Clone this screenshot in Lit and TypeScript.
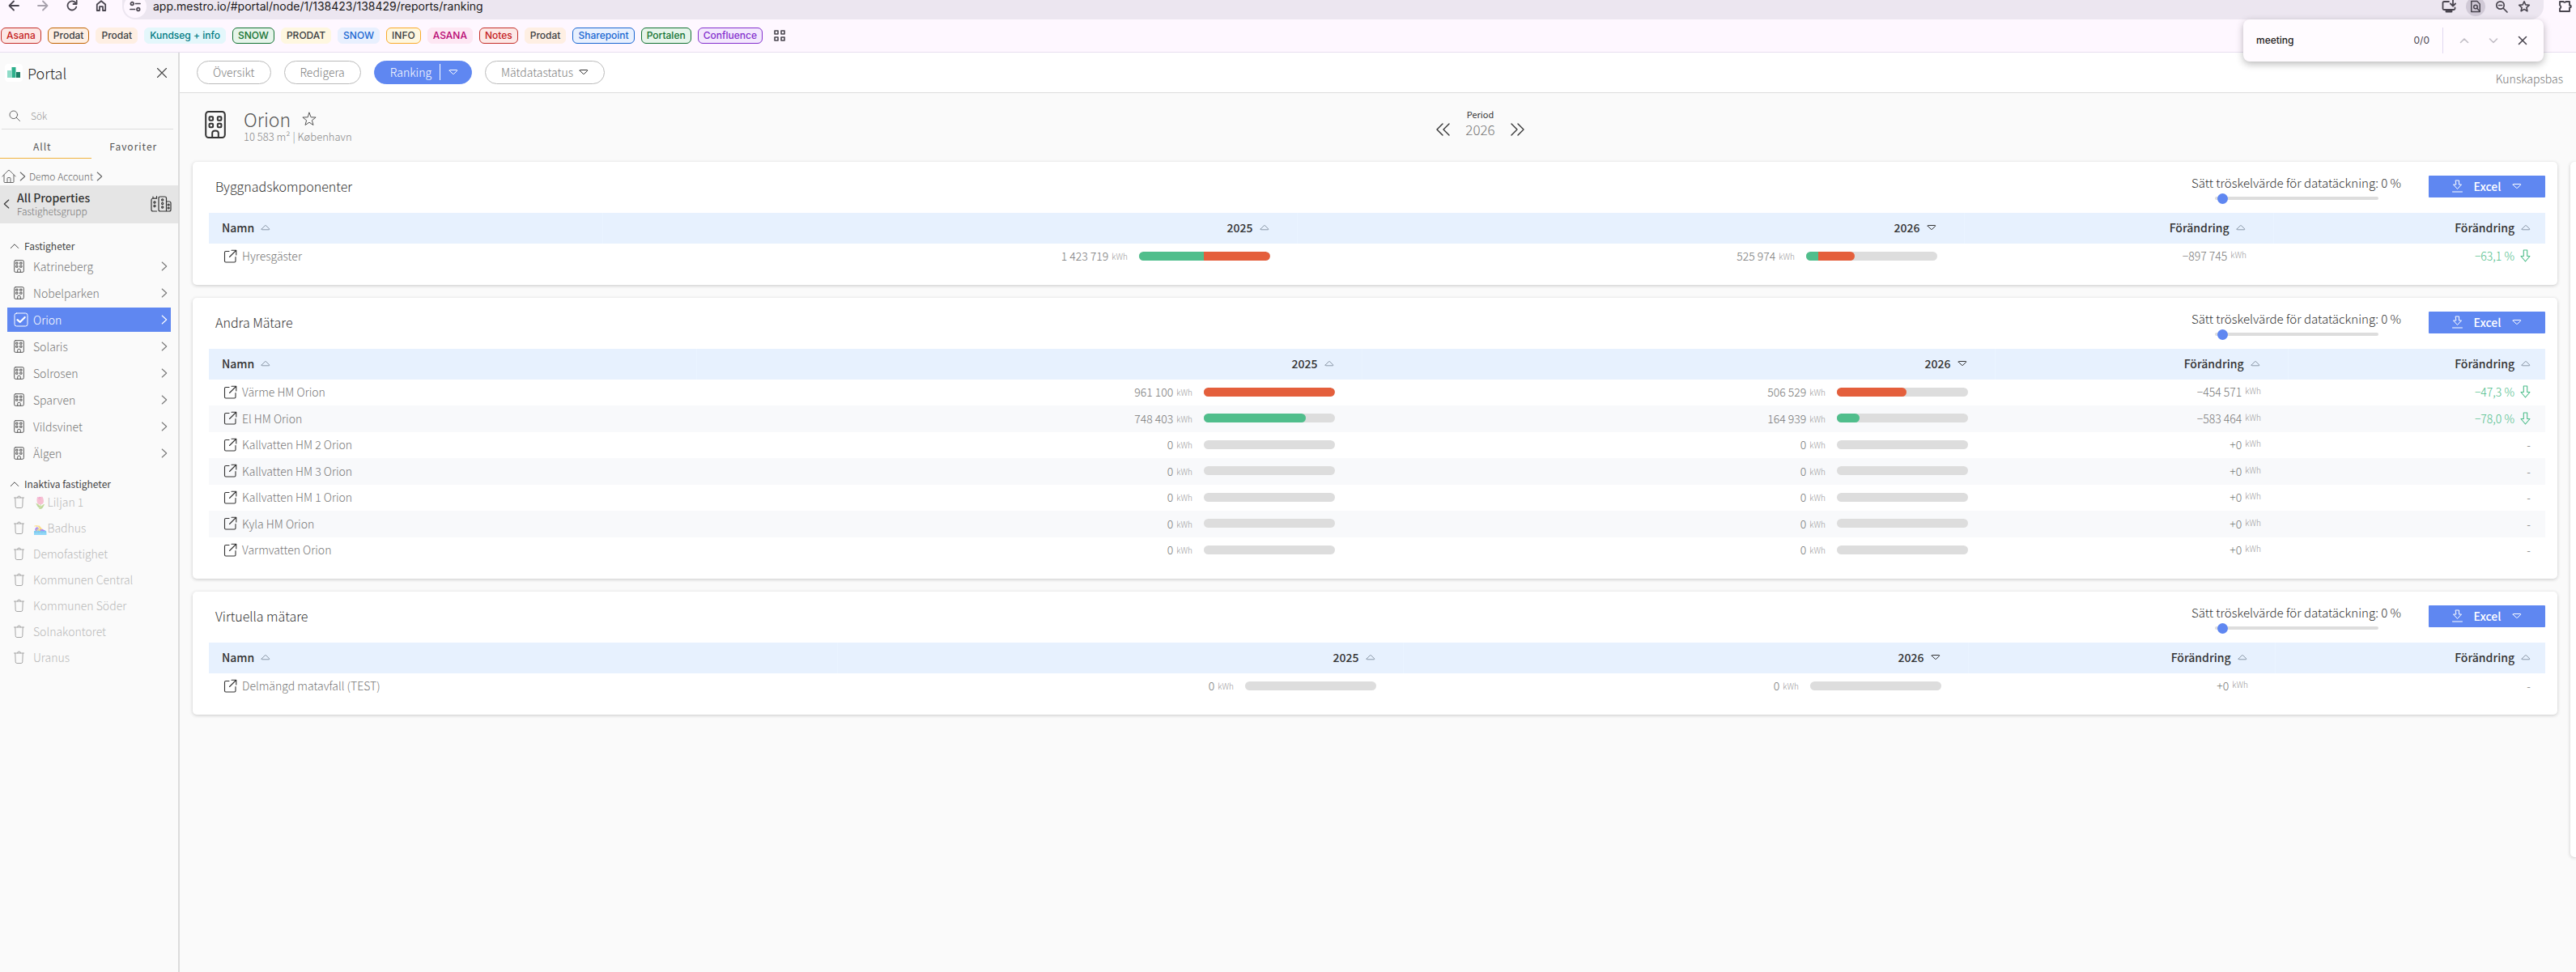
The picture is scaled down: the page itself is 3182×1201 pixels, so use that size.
import { LitElement, html, css, svg, nothing } from "lit";
import { customElement, property } from "lit/decorators.js";
import { classMap } from "lit/directives/class-map.js";

type IconName =
  | "back" | "forward" | "reload" | "home" | "tune" | "install" | "findPage" | "zoomOut" | "star"
  | "puzzle" | "apps" | "chevUp" | "chevDown" | "cross" | "logo" | "thinCross" | "search" | "house"
  | "chevRight" | "chevLeft" | "caretUp" | "city" | "building" | "checkbox" | "trash" | "bigBuilding"
  | "thinStar" | "double" | "doubleRight" | "open" | "triUp" | "triDown" | "download" | "arrowDown";

const ICONS: Record<IconName, { box: string; w: number; h: number; sw: number; body: unknown }> = {
  back: { box: "0 0 14 14", w: 14, h: 14, sw: 1.8, body: svg`<path d="M13 7H2M7 1.5L1.5 7L7 12.5"/>` },
  forward: { box: "0 0 14 14", w: 14, h: 14, sw: 1.8, body: svg`<path d="M1 7h11M7 1.5L12.5 7L7 12.5"/>` },
  reload: { box: "0 0 14 14", w: 14, h: 14, sw: 1.8, body: svg`<path d="M12.3 8.5A5.5 5.5 0 1 1 11.2 3.4L12.5 4.8M12.7 .8V5H8.5"/>` },
  home: { box: "0 0 14 14", w: 14, h: 14, sw: 1.8, body: svg`<path d="M1.8 5.5L7 1.2l5.2 4.3V13H9V8.2H5V13H1.8z"/>` },
  tune: { box: "0 0 14 14", w: 14, h: 14, sw: 1.7, body: svg`<circle cx="3.2" cy="3.5" r="1.8"/><path d="M7.5 3.5H13M1 10.5h5.5"/><circle cx="10.8" cy="10.5" r="1.8"/>` },
  install: { box: "0 0 18 16", w: 18, h: 16, sw: 1.8, body: svg`<path d="M9 2H3a1.5 1.5 0 0 0-1.5 1.5v7A1.5 1.5 0 0 0 3 12h12a1.5 1.5 0 0 0 1.5-1.5V9.5M14 0v7M11 4.5l3 3l3-3"/><path d="M6 14h6" stroke-width="3"/>` },
  findPage: { box: "0 0 16 18", w: 14, h: 16, sw: 1.7, body: svg`<path d="M2 1.5h8l4 4V16.5H2z"/><circle cx="8" cy="9.5" r="2.6"/><path d="M10 11.5l4 4.5"/>` },
  zoomOut: { box: "0 0 16 16", w: 16, h: 16, sw: 1.7, body: svg`<circle cx="6.5" cy="6.5" r="4.7"/><path d="M10 10l5 5M4.5 6.5h4"/>` },
  star: { box: "0 0 16 16", w: 16, h: 16, sw: 1.6, body: svg`<path d="M8 1.8l1.8 4.1 4.5.4-3.4 3 1 4.4L8 11.4l-3.9 2.3 1-4.4-3.4-3 4.5-.4z"/>` },
  puzzle: { box: "0 0 18 16", w: 18, h: 16, sw: 1.9, body: svg`<path d="M2 2h4.5c.6 1.2 2.4 1.2 3 0H14v4.5c2.4 0 2.4 3 0 3V14H2v-3.5c1.8-.8 1.8-3.2 0-4z"/>` },
  apps: { box: "0 0 14 14", w: 14, h: 14, sw: 1.6, body: svg`<path d="M1 1h4v4H1zM9 1h4v4H9zM1 9h4v4H1zM9 9h4v4H9z"/>` },
  chevUp: { box: "0 0 12 12", w: 12, h: 12, sw: 1.6, body: svg`<path d="M1.5 8.5L6 4l4.5 4.5"/>` },
  chevDown: { box: "0 0 12 12", w: 12, h: 12, sw: 1.6, body: svg`<path d="M1.5 4L6 8.5L10.5 4"/>` },
  cross: { box: "0 0 12 12", w: 12, h: 12, sw: 1.6, body: svg`<path d="M1.5 1.5l9 9M10.5 1.5l-9 9"/>` },
  logo: { box: "0 0 22 22", w: 22, h: 22, sw: 0, body: svg`<rect width="22" height="22" rx="4" fill="#fff"/><path d="M3 8h5v9H3z" fill="#8fdcc8"/><path d="M8.5 4h5v13h-5z" fill="#2eb08c"/><path d="M14 10h5v7h-5z" fill="#1d7f66"/>` },
  thinCross: { box: "0 0 14 14", w: 14, h: 14, sw: 1.1, body: svg`<path d="M1.5 1.5l11 11M12.5 1.5l-11 11"/>` },
  search: { box: "0 0 14 14", w: 14, h: 14, sw: 1, body: svg`<circle cx="5.8" cy="5.8" r="4.8"/><path d="M9.3 9.3l4.2 4.2"/>` },
  house: { box: "0 0 18 18", w: 18, h: 18, sw: 1, body: svg`<path d="M.8 9L8 1.8q1-1 2 0L17.2 9M3 7.2V15.5q0 1 1 1H14q1 0 1-1V7.2M7 16.5V11.5q0-1 1-1h2q1 0 1 1v5"/>` },
  chevRight: { box: "0 0 8 12", w: 8, h: 12, sw: 1.1, body: svg`<path d="M1.2 1l5.5 5L1.2 11"/>` },
  chevLeft: { box: "0 0 8 12", w: 8, h: 12, sw: 1.1, body: svg`<path d="M6.8 1L1.3 6l5.5 5"/>` },
  caretUp: { box: "0 0 12 8", w: 12, h: 8, sw: 1, body: svg`<path d="M1.3 6.5L6 1.8l4.7 4.7"/>` },
  city: { box: "0 0 26 20", w: 26, h: 20, sw: 1.2, body: svg`<path d="M7.5 19H3q-2 0-2-2V5q0-1.5 2-2V1.2M3 3.2h4.5V.5M10 17V3q0-2 2-2h5.500q2 0 2 2v16H12q-2 0-2-2M19.500 7h3.500q2 0 2 2v8q0 2-2 2h-3.500"/><circle cx="5" cy="8" r="1.100"/><circle cx="5" cy="12.5" r="1.100"/><circle cx="14.700" cy="5" r="1.100"/><circle cx="14.700" cy="9.5" r="1.100"/><circle cx="14.700" cy="14" r="1.100"/><circle cx="22.200" cy="11" r="1"/><circle cx="22.200" cy="15" r="1"/>` },
  building: { box: "0 0 13 16", w: 13, h: 16, sw: 1, body: svg`<rect x=".7" y=".7" width="11.6" height="14.6" rx="1.5"/><path d="M3 3.2h2v2H3zM8 3.2h2v2H8zM3 7.2h2v2H3zM8 7.2h2v2H8zM4.7 15v-2.5q0-1.2 1.8-1.2t1.8 1.2V15"/>` },
  checkbox: { box: "0 0 18 18", w: 18, h: 18, sw: 1, body: svg`<rect x="1" y="1" width="16" height="16" rx="2.5"/><path d="M4.5 9.2l3.2 2.8l6-6" stroke-width="2.2"/>` },
  trash: { box: "0 0 13 16", w: 13, h: 16, sw: 1, body: svg`<path d="M.5 3h12M4.5 2.8q0-1.8 2-1.8t2 1.8M1.8 3.2l.4 10.6q.1 1.7 1.7 1.7h5.2q1.6 0 1.7-1.7l.4-10.6"/>` },
  bigBuilding: { box: "0 0 26 34", w: 26, h: 34, sw: 2, body: svg`<rect x="1.2" y="1" width="23.6" height="32" rx="3.5"/><rect x="5.5" y="7.2" width="4.6" height="4.6" rx="1"/><rect x="15.8" y="7.2" width="4.6" height="4.6" rx="1"/><rect x="5.5" y="15.7" width="4.6" height="4.6" rx="1"/><rect x="15.8" y="15.7" width="4.6" height="4.6" rx="1"/><path d="M9.2 33v-5.5q0-3 3.8-3t3.8 3V33"/>` },
  thinStar: { box: "0 0 18 18", w: 18, h: 18, sw: 1, body: svg`<path d="M9 1.2l2.1 5.6 6 .2-4.7 3.7 1.6 5.8L9 13.2l-5 3.3 1.6-5.8L.9 7l6-.2z"/>` },
  double: { box: "0 0 17 16", w: 17, h: 16, sw: 1.4, body: svg`<path d="M8 1L1 8l7 7M16 1L9 8l7 7"/>` },
  doubleRight: { box: "0 0 17 16", w: 17, h: 16, sw: 1.4, body: svg`<path d="M1 1l7 7l-7 7M9 1l7 7l-7 7"/>` },
  open: { box: "0 0 17 17", w: 17, h: 17, sw: 1.1, body: svg`<path d="M7 2.5H3q-1.5 0-1.5 1.5v10.5q0 1.5 1.5 1.5h10.5q1.5 0 1.5-1.5V9.5M10 1.2h5.8V7M15.5 1.5L7.5 9.5"/>` },
  triUp: { box: "0 0 12 8", w: 12, h: 8, sw: 1, body: svg`<path d="M1.2 6L5.3 1.8q.7-.7 1.4 0L10.8 6q.2.8-.6.8H1.8q-.8 0-.6-.8z"/>` },
  triDown: { box: "0 0 12 8", w: 12, h: 8, sw: 1, body: svg`<path d="M1.2 2.2L5.3 6.2q.7.7 1.4 0L10.8 2.2q.1-.7-.6-.7H1.8q-.7 0-.6.7z"/>` },
  download: { box: "0 0 13 16", w: 13, h: 16, sw: 1, body: svg`<path d="M4.5 1h4v5h3l-5 5.5L1.5 6h3zM.5 15h12"/>` },
  arrowDown: { box: "0 0 13 16", w: 13, h: 16, sw: 1.1, body: svg`<path d="M4.3 1h4.4v7.5H12L6.5 15L1 8.5h3.3z"/>` },
};

const icon = (name: IconName) => {
  const i = ICONS[name];
  return html`<svg class="icon" width=${i.w} height=${i.h} viewBox=${i.box} fill="none" stroke="currentColor"
    stroke-width=${i.sw} stroke-linecap="round" stroke-linejoin="round" aria-hidden="true">${i.body}</svg>`;
};

const shared = css`
  * { box-sizing: border-box; }
  .icon { display: block; flex: none; overflow: visible; }
  button, input { font: inherit; color: inherit; letter-spacing: inherit; margin: 0; padding: 0; border: 0; background: none; }
  button { display: flex; align-items: center; cursor: pointer; }
  a { color: inherit; text-decoration: none; }
  ul { list-style: none; margin: 0; padding: 0; }
  h1, h2, h3, p { margin: 0; font-weight: inherit; font-size: inherit; }
`;

const SANS = css`"Noto Sans CJK SC", "Noto Color Emoji", sans-serif`;

interface Bookmark { label: string; ink: string; fill: string; line?: string }

const BOOKMARKS: Bookmark[] = [
  { label: "Asana", ink: "#c5221f", fill: "#fce8e6", line: "#c5302a" },
  { label: "Prodat", ink: "#3c4043", fill: "#feefe3", line: "#c26401" },
  { label: "Prodat", ink: "#3c4043", fill: "#feefe3" },
  { label: "Kundseg + info", ink: "#007b83", fill: "#e4f7fb" },
  { label: "SNOW", ink: "#137333", fill: "#e6f4ea", line: "#137333" },
  { label: "PRODAT", ink: "#3c4043", fill: "#fef7e0" },
  { label: "SNOW", ink: "#1967d2", fill: "#e8f0fe" },
  { label: "INFO", ink: "#3c4043", fill: "#fef7e0", line: "#f9ab2b" },
  { label: "ASANA", ink: "#b80672", fill: "#fde7f3" },
  { label: "Notes", ink: "#c5221f", fill: "#fce8e6", line: "#c5302a" },
  { label: "Prodat", ink: "#3c4043", fill: "#feefe3" },
  { label: "Sharepoint", ink: "#1967d2", fill: "#e8f0fe", line: "#1967d2" },
  { label: "Portalen", ink: "#137333", fill: "#e6f4ea", line: "#137333" },
  { label: "Confluence", ink: "#8430ce", fill: "#f3e8fd", line: "#8430ce" },
];

@customElement("browser-chrome")
class BrowserChrome extends LitElement {
  static styles = [shared, css`
    :host { display: block; position: relative; z-index: 2; background: #fef7ff; border-bottom: 1px solid #e7dff0; font: 500 12px/18px Inter, sans-serif; color: #49454f; }
    .bar { display: flex; height: 24px; }
    .nav { display: flex; gap: 22px; width: 151px; height: 14px; padding-left: 10px; }
    .faded { color: #a7a1ac; }
    .address { flex: 1; display: flex; align-items: center; height: 24px; padding: 0 16px 8px 8px; background: #ece6f0; border-radius: 0 0 16px 16px; }
    .site { width: 28px; height: 28px; justify-content: center; margin: 0 8px 0 -6px; background: #fef7ff; border-radius: 14px; }
    .url { flex: 1; font-size: 14px; font-weight: 400; color: #1d1b20; }
    .tools { display: flex; align-items: center; gap: 12px; }
    .round { width: 24px; height: 24px; border-radius: 12px; background: #d0c9d6; justify-content: center; }
    .end { width: 40px; padding-left: 18px; height: 16px; }
    .marks { display: flex; align-items: center; gap: 8px; padding: 10px 1px; }
    .mark { padding: 0 6px; border: 1px solid transparent; border-radius: 6px; line-height: 18px; }
    .apps { margin-left: 6px; }
    .find { position: absolute; top: 24px; right: 40px; width: 371px; height: 52px; display: flex; align-items: center; padding: 0 16px; background: #fffbff; border-radius: 8px; box-shadow: 0 3px 10px rgba(0, 0, 0, .28); }
    .term { flex: 1; min-width: 0; color: #1d1b20; }
    .count { font-weight: 400; padding-right: 16px; }
    .steps { display: flex; align-items: center; gap: 24px; height: 32px; padding: 0 4px 0 20px; border-left: 1px solid #e0d8f0; }
    .pale { color: #c2bec6; }
    input { outline: none; }
  `];

  render() {
    return html`
      <div class="bar">
        <div class="nav">
          <button aria-label="Back">${icon("back")}</button>
          <button class="faded" aria-label="Forward">${icon("forward")}</button>
          <button aria-label="Reload">${icon("reload")}</button>
          <button aria-label="Home">${icon("home")}</button>
        </div>
        <div class="address">
          <button class="site" aria-label="Site information">${icon("tune")}</button>
          <input class="url" aria-label="Address" .value=${"app.mestro.io/#portal/node/1/138423/138429/reports/ranking"}>
          <div class="tools">
            <button aria-label="Install">${icon("install")}</button>
            <button class="round" aria-label="Find in page">${icon("findPage")}</button>
            <button aria-label="Zoom">${icon("zoomOut")}</button>
            <button aria-label="Bookmark">${icon("star")}</button>
          </div>
        </div>
        <button class="end" aria-label="Extensions">${icon("puzzle")}</button>
      </div>
      <nav class="marks">
        ${BOOKMARKS.map((b) => html`<a class="mark" href="#" style="color:${b.ink};background:${b.fill};border-color:${b.line ?? b.fill}">${b.label}</a>`)}
        <button class="apps" aria-label="Tab groups">${icon("apps")}</button>
      </nav>
      <div class="find">
        <input class="term" aria-label="Find" .value=${"meeting"}>
        <span class="count">0/0</span>
        <div class="steps">
          <button class="pale" aria-label="Previous">${icon("chevUp")}</button>
          <button class="pale" aria-label="Next">${icon("chevDown")}</button>
          <button aria-label="Close">${icon("cross")}</button>
        </div>
      </div>`;
  }
}

const ACTIVE = ["Katrineberg", "Nobelparken", "Orion", "Solaris", "Solrosen", "Sparven", "Vildsvinet", "Älgen"];
const INACTIVE = ["🌷Liljan 1", "🏊‍♀️Badhus", "Demofastighet", "Kommunen Central", "Kommunen Söder", "Solnakontoret", "Uranus"];

@customElement("portal-sidebar")
class PortalSidebar extends LitElement {
  static styles = [shared, css`
    :host { display: block; width: 222px; flex: none; background: #fafafa; border-right: 2px solid #dcdcdc; font: 300 14px/20px ${SANS}; color: #666; }
    .brand { display: flex; align-items: center; gap: 6px; padding: 12px 13px 0 6px; height: 38px; color: #444; }
    .name { flex: 1; font-size: 18px; line-height: 26px; color: #222; }
    .search { display: flex; align-items: center; gap: 13px; margin: 26px 6px 0 2px; padding: 0 9px 2px; height: 31px; border-bottom: 1px solid #ddd; font-size: 12px; }
    .search input { flex: 1; min-width: 0; outline: none; }
    .search input::placeholder { color: #999; }
    .tabs { display: flex; font-size: 12px; font-weight: 400; letter-spacing: 1px; color: #555; }
    .tab { flex: 1; height: 36px; padding: 6px 3px 0 0; justify-content: center; border-bottom: 1px solid transparent; }
    .tab.on { padding-right: 8px; border-color: #f0b23c; }
    .crumbs { display: flex; align-items: center; gap: 4px; height: 33px; padding: 10px 2px 0; font-size: 12px; }
    .group { display: flex; align-items: center; gap: 9px; height: 47px; padding: 0 8px 2px 4px; background: #e5e5e5; color: #333; }
    .text { flex: 1; }
    .title { font-size: 14px; line-height: 18px; font-weight: 500; }
    .sub { font-size: 12px; line-height: 15px; color: #777; }
    .section { gap: 6px; padding: 18px 0 0 12px; font-size: 12px; font-weight: 400; color: #444; height: 38px; }
    .list { padding: 0 9px; }
    .item { display: flex; align-items: center; height: 30px; margin: 0 0 3px; padding: 0 4px 0 8px; color: #777; }
    .item .icon:first-child { margin-right: 11px; color: #555; }
    .item span { flex: 1; }
    .item.on { background: #5f87f1; color: #fff; }
    .item.on .icon:first-child { color: #fff; margin-right: 6px; }
    .section.later { height: 27px; padding-top: 12px; }
    .off { opacity: .5; height: 29px; }
  `];

  render() {
    return html`
      <header class="brand">${icon("logo")}<span class="name">Portal</span><button aria-label="Stäng">${icon("thinCross")}</button></header>
      <label class="search">${icon("search")}<input type="search" aria-label="Sök" placeholder="Sök"></label>
      <div class="tabs"><button class="tab on">Allt</button><button class="tab">Favoriter</button></div>
      <nav class="crumbs">${icon("house")}${icon("chevRight")}<a href="#">Demo Account</a>${icon("chevRight")}</nav>
      <div class="group">
        <button aria-label="Tillbaka">${icon("chevLeft")}</button>
        <div class="text"><h2 class="title">All Properties</h2><p class="sub">Fastighetsgrupp</p></div>
        ${icon("city")}
      </div>
      <button class="section">${icon("caretUp")}Fastigheter</button>
      <ul class="list">
        ${ACTIVE.map((n) => html`<li><a href="#" class=${classMap({ item: true, on: n === "Orion" })}>
          ${icon(n === "Orion" ? "checkbox" : "building")}<span>${n}</span>${icon("chevRight")}</a></li>`)}
      </ul>
      <button class="section later">${icon("caretUp")}Inaktiva fastigheter</button>
      <ul class="list">
        ${INACTIVE.map((n) => html`<li><a href="#" class="item off">${icon("trash")}<span>${n}</span></a></li>`)}
      </ul>`;
  }
}

interface Bar { value: string; green: number; red: number }
interface Row { name: string; a: Bar; b: Bar; diff: string; pct?: string }

@customElement("ranking-card")
class RankingCard extends LitElement {
  @property() heading = "";
  @property({ attribute: false }) rows: Row[] = [];
  @property({ attribute: false }) columns: number[] = [];

  static styles = [shared, css`
    :host { display: block; padding: 0 15px 19px 20px; background: #fff; border-radius: 5px; box-shadow: 0 1px 4px rgba(0, 0, 0, .2); font: 300 14px/20px ${SANS}; color: #777; }
    .top { display: flex; height: 63px; padding-left: 8px; color: #333; }
    .heading { flex: 1; padding-top: 18px; font-size: 16px; line-height: 24px; }
    .threshold { display: flex; flex-direction: column; align-items: center; gap: 7px; padding-top: 16px; margin-right: 34px; font-size: 15px; }
    .range { appearance: none; display: block; width: 202px; height: 4px; padding: 0 3px; border-radius: 2px; background: #ddd; outline: none; }
    .range::-webkit-slider-runnable-track { height: 4px; }
    .range::-webkit-slider-thumb { appearance: none; width: 13px; height: 13px; margin-top: -4px; border-radius: 50%; background: #5f87f1; }
    .excel { gap: 14px; width: 144px; height: 27px; margin-top: 17px; padding-bottom: 1px; justify-content: center; background: #5f87f1; color: #fff; font-weight: 500; border-radius: 1px; }
    table { width: 100%; table-layout: fixed; border-collapse: collapse; }
    th { height: 38px; padding: 0 34px 2px 16px; background: #e7f1fe; color: #333; font-weight: 500; text-align: left; border-right: 1px solid #eaf4ff; }
    th:last-child { border-right: 0; }
    .sort { gap: 8px; }
    .sort .icon { color: #8b98a8; }
    .sort.by .icon { color: #333; }
    .num .sort { margin-left: auto; }
    td { height: 32px; padding: 0 33px 2px 18px; }
    tr:nth-child(even) td { height: 33px; background: #f8f9fb; }
    th:last-child, td:last-child { padding-right: 18px; }
    .name { display: flex; align-items: center; gap: 6px; }
    .name .icon { color: #333; }
    .cell { display: flex; align-items: center; justify-content: flex-end; }
    .unit { font-size: 10px; margin-left: 4px; padding-top: 2px; color: #999; }
    .diff .unit { padding: 0 0 2px; }
    .bar { display: flex; width: 162px; height: 11px; margin-left: 14px; border-radius: 6px; background: #ddd; overflow: hidden; }
    .part { height: 100%; }
    .part:last-child { border-radius: 0 6px 6px 0; }
    .green { background: #50be8c; }
    .red { background: #e45f3c; }
    .pct { gap: 7px; color: #4dbd8a; }
  `];

  private bar(b: Bar) {
    return html`<div class="cell">${b.value}<span class="unit">kWh</span>
      <div class="bar">
        ${b.green ? html`<div class="part green" style="width:${b.green}%"></div>` : nothing}
        ${b.red ? html`<div class="part red" style="width:${b.red}%"></div>` : nothing}
      </div></div>`;
  }

  private head(label: string, num = true, by = false) {
    return html`<th class=${num ? "num" : ""}><button class=${classMap({ sort: true, by })}>${label}${icon(by ? "triDown" : "triUp")}</button></th>`;
  }

  render() {
    const total = this.columns.reduce((s, c) => s + c, 0);
    return html`
      <div class="top">
        <h2 class="heading">${this.heading}</h2>
        <label class="threshold">Sätt tröskelvärde för datatäckning: 0 %<input class="range" type="range" min="0" max="100" .value=${"0"}></label>
        <button class="excel">${icon("download")}Excel${icon("triDown")}</button>
      </div>
      <table>
        <colgroup>${this.columns.map((c) => html`<col style="width:${(c / total) * 100}%">`)}</colgroup>
        <thead><tr>${this.head("Namn", false)}${this.head("2025")}${this.head("2026", true, true)}${this.head("Förändring")}${this.head("Förändring")}</tr></thead>
        <tbody>
          ${this.rows.map((r) => html`<tr>
            <td><a class="name" href="#">${icon("open")}${r.name}</a></td>
            <td>${this.bar(r.a)}</td>
            <td>${this.bar(r.b)}</td>
            <td><div class="cell diff">${r.diff}<span class="unit">kWh</span></div></td>
            <td>${r.pct ? html`<div class="cell pct">${r.pct}${icon("arrowDown")}</div>` : html`<div class="cell">-</div>`}</td>
          </tr>`)}
        </tbody>
      </table>`;
  }
}

const empty = (name: string): Row => ({
  name, a: { value: "0", green: 0, red: 0 }, b: { value: "0", green: 0, red: 0 }, diff: "+0",
});

const CARDS: { heading: string; columns: number[]; rows: Row[] }[] = [
  {
    heading: "Byggnadskomponenter",
    columns: [486, 858, 824, 382, 336],
    rows: [{ name: "Hyresgäster", a: { value: "1 423 719", green: 49.5, red: 50.5 }, b: { value: "525 974", green: 9.5, red: 27.5 }, diff: "−897 745", pct: "−63,1 %" }],
  },
  {
    heading: "Andra Mätare",
    columns: [602, 822, 782, 362, 318],
    rows: [
      { name: "Värme HM Orion", a: { value: "961 100", green: 0, red: 100 }, b: { value: "506 529", green: 0, red: 53 }, diff: "−454 571", pct: "−47,3 %" },
      { name: "El HM Orion", a: { value: "748 403", green: 78, red: 0 }, b: { value: "164 939", green: 17, red: 0 }, diff: "−583 464", pct: "−78,0 %" },
      ...["Kallvatten HM 2 Orion", "Kallvatten HM 3 Orion", "Kallvatten HM 1 Orion", "Kyla HM Orion", "Varmvatten Orion"].map(empty),
    ],
  },
  { heading: "Virtuella mätare", columns: [776, 699, 698, 379, 334], rows: [empty("Delmängd matavfall (TEST)")] },
];

@customElement("app-root")
class AppRoot extends LitElement {
  static styles = [shared, css`
    :host { display: flex; flex-direction: column; min-height: 100vh; background: #fafafa; font: 300 14px/20px ${SANS}; color: #777; overflow: hidden; }
    .body { flex: 1; display: flex; }
    main { flex: 1; min-width: 0; }
    .topbar { display: flex; align-items: center; gap: 16px; height: 50px; padding: 0 16px 0 21px; background: #fff; border-bottom: 1px solid #ddd; }
    .pill { height: 29px; padding: 0 19px 1px; border: 1px solid #bbb; border-radius: 15px; color: #808080; gap: 7px; }
    .pill .icon { color: #333; }
    .pill.on { background: #5f87f1; border-color: #5f87f1; color: #fff; padding: 0 16px 1px 19px; gap: 10px; }
    .pill.on .icon { color: #fff; }
    .split { width: 1px; height: 20px; background: #fff; }
    .help { margin: 14px 0 0 auto; }
    .head { display: grid; grid-template-columns: 1fr auto 1fr; align-items: start; height: 85px; padding: 18px 0 0 31px; }
    .who { display: flex; gap: 22px; padding-top: 4px; color: #333; }
    .title { display: flex; align-items: center; gap: 14px; font-size: 23px; line-height: 20px; color: #555; }
    .meta { margin-top: 4px; font-size: 13px; line-height: 16px; color: #888; }
    .period { display: grid; grid-template-columns: auto auto auto; justify-items: center; align-items: center; column-gap: 19px; color: #333; margin-left: 222px; }
    .label { grid-column: 1 / -1; font-size: 11px; line-height: 16px; font-weight: 400; }
    .year { font-size: 17px; line-height: 22px; color: #777; }
    .content { display: flex; gap: 16px; padding-left: 16px; }
    .cards { flex: 1; min-width: 0; display: flex; flex-direction: column; gap: 16px; }
    .side { width: 7px; height: 859px; background: #fff; border-radius: 5px 0 0 5px; box-shadow: 0 1px 4px rgba(0, 0, 0, .2); }
  `];

  render() {
    return html`
      <browser-chrome></browser-chrome>
      <div class="body">
        <portal-sidebar></portal-sidebar>
        <main>
          <nav class="topbar">
            <button class="pill">Översikt</button>
            <button class="pill">Redigera</button>
            <button class="pill on">Ranking<span class="split"></span>${icon("triDown")}</button>
            <button class="pill">Mätdatastatus${icon("triDown")}</button>
            <a class="help" href="#">Kunskapsbas</a>
          </nav>
          <header class="head">
            <div class="who">
              ${icon("bigBuilding")}
              <div><h1 class="title">Orion<button aria-label="Favorit">${icon("thinStar")}</button></h1><p class="meta">10 583 m² | København</p></div>
            </div>
            <div class="period">
              <span class="label">Period</span>
              <button aria-label="Föregående">${icon("double")}</button>
              <span class="year">2026</span>
              <button aria-label="Nästa">${icon("doubleRight")}</button>
            </div>
          </header>
          <div class="content">
            <div class="cards">
              ${CARDS.map((c) => html`<ranking-card .heading=${c.heading} .columns=${c.columns} .rows=${c.rows}></ranking-card>`)}
            </div>
            <aside class="side"></aside>
          </div>
        </main>
      </div>`;
  }
}
